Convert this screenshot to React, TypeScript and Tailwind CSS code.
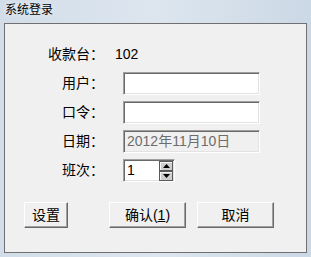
import React from "react";

// classic sunken edit box
function Edit({ value, disabled, className = "" }: { value?: string; disabled?: boolean; className?: string }) {
  return (
    <div
      className={`h-[23px] border border-t-[#a0a0a0] border-l-[#a0a0a0] border-r-white border-b-white shadow-[inset_1px_1px_0_#696969,inset_-1px_-1px_0_#e3e3e3] flex items-center pl-[3px] text-[14px] leading-[17px] ${
        disabled ? "bg-[#f0f0f0] text-[#6d6d6d]" : "bg-white text-black"
      } ${className}`}
    >
      {value}
    </div>
  );
}

function Btn({ children, className = "" }: { children: React.ReactNode; className?: string }) {
  return (
    <button className={`h-[26px] bg-[#f0f0f0] border border-t-white border-l-white border-r-[#696969] border-b-[#696969] shadow-[inset_-1px_-1px_0_#a0a0a0] text-[14px] leading-[17px] text-black flex items-center justify-center ${className}`}>
      {children}
    </button>
  );
}

function SpinArrow({ up }: { up?: boolean }) {
  return (
    <div className="w-[14px] h-[10px] bg-[#cfcfcf] border border-[#5a5a5a] shadow-[inset_1px_1px_0_#f4f4f4] flex items-center justify-center">
      <svg width="7" height="4" viewBox="0 0 7 4">
        {up ? <polygon points="0,4 7,4 3.5,0" fill="#000" /> : <polygon points="0,0 7,0 3.5,4" fill="#000" />}
      </svg>
    </div>
  );
}

export default function App() {
  const labels = "text-right text-[14px] leading-[23px] text-black";
  return (
    <div className="w-[311px] h-[257px] bg-gradient-to-r from-[#d2dde9] via-[#dde6ef] to-[#cbd8e5] flex flex-col font-['Liberation_Sans','Noto_Sans_CJK_SC',sans-serif]">
      {/* Title bar */}
      <div className="h-[23px] pl-[5px] pt-[3px] text-[12px] leading-[15px] text-black [text-shadow:0_0_6px_#ffffff]">
        系统登录
      </div>

      {/* Panel */}
      <div className="mx-[4px] h-[230px] border border-[#707070] bg-[#f0f0f0] flex flex-col">
        <div className="mt-[19px] pl-[43px] grid grid-cols-[56px_1fr] gap-x-[11px] gap-y-[6px]">
          <div className={labels}>收款台：</div>
          <div className="text-[14px] leading-[23px] text-black">102</div>

          <div className={labels}>用户：</div>
          <Edit className="ml-[8px] w-[137px]" />

          <div className={labels}>口令：</div>
          <Edit className="ml-[8px] w-[137px]" />

          <div className={labels}>日期：</div>
          <Edit className="ml-[8px] w-[137px]" value="2012年11月10日" disabled />

          <div className={labels}>班次：</div>
          <div className="ml-[8px] w-[52px] h-[23px] border border-t-[#a0a0a0] border-l-[#a0a0a0] border-r-white border-b-white shadow-[inset_1px_1px_0_#696969,inset_-1px_-1px_0_#e3e3e3] bg-white flex items-center">
            <span className="flex-1 pl-[3px] text-[14px] leading-[17px] text-black">1</span>
            <div className="flex flex-col mr-[1px]">
              <SpinArrow up />
              <SpinArrow />
            </div>
          </div>
        </div>

        {/* Buttons */}
        <div className="mt-[20px] pl-[19px] flex">
          <Btn className="w-[44px]">设置</Btn>
          <Btn className="w-[77px] ml-[41px]">
            确认(<span className="underline">1</span>)
          </Btn>
          <Btn className="w-[77px] ml-[11px]">取消</Btn>
        </div>
      </div>
    </div>
  );
}
